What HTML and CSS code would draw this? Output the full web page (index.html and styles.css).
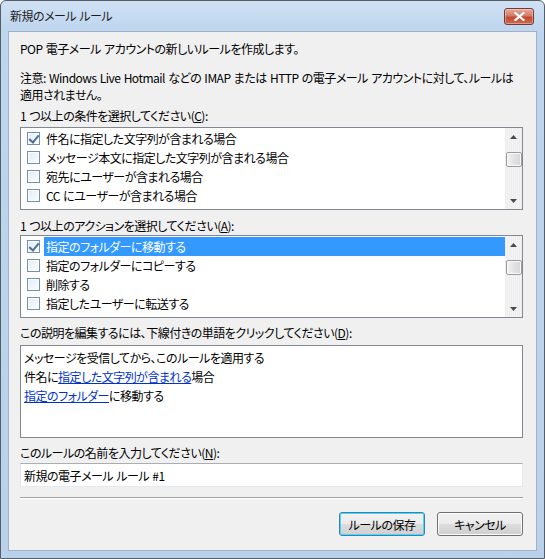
FILE: index.html
```html
<!DOCTYPE html>
<html lang="ja">

<head>
  <meta charset="UTF-8">
  <title>新規のメール ルール</title>
  <link rel="stylesheet" href="styles.css">
</head>

<body>
  <div class="window">
    <div class="titlebar">
      <span class="title">新規のメール ルール</span>
      <button class="close-btn" type="button">
        <svg width="11" height="9" viewBox="0 0 11 9">
          <path d="M1.5 1 L9.5 8 M9.5 1 L1.5 8" stroke="#fff" stroke-width="2.2" stroke-linecap="square" />
        </svg>
      </button>
    </div>

    <div class="client">
      <p class="intro">POP 電子メール アカウントの新しいルールを作成します。</p>
      <p class="note">注意: Windows Live Hotmail などの IMAP または HTTP の電子メール アカウントに対して、ルールは<br>適用されません。</p>

      <div class="caption">1 つ以上の条件を選択してください(<u>C</u>):</div>
      <div class="listbox">
        <ul class="list">
          <li><span class="check is-checked"></span>件名に指定した文字列が含まれる場合</li>
          <li><span class="check"></span>メッセージ本文に指定した文字列が含まれる場合</li>
          <li><span class="check"></span>宛先にユーザーが含まれる場合</li>
          <li><span class="check"></span>CC にユーザーが含まれる場合</li>
        </ul>
        <div class="scrollbar">
          <div class="scroll-arrow">
            <svg width="7" height="4" viewBox="0 0 7 4"><path d="M0 4 L3.5 0 L7 4 Z" fill="#4a4a4a" /></svg>
          </div>
          <div class="scroll-track">
            <div class="scroll-thumb"></div>
          </div>
          <div class="scroll-arrow">
            <svg width="7" height="4" viewBox="0 0 7 4"><path d="M0 0 L7 0 L3.5 4 Z" fill="#4a4a4a" /></svg>
          </div>
        </div>
      </div>

      <div class="caption caption-actions">1 つ以上のアクションを選択してください(<u>A</u>):</div>
      <div class="listbox listbox-actions">
        <ul class="list">
          <li><span class="check is-checked"></span><span class="item-text is-selected">指定のフォルダーに移動する</span></li>
          <li><span class="check"></span>指定のフォルダーにコピーする</li>
          <li><span class="check"></span>削除する</li>
          <li><span class="check"></span>指定したユーザーに転送する</li>
        </ul>
        <div class="scrollbar">
          <div class="scroll-arrow">
            <svg width="7" height="4" viewBox="0 0 7 4"><path d="M0 4 L3.5 0 L7 4 Z" fill="#4a4a4a" /></svg>
          </div>
          <div class="scroll-track">
            <div class="scroll-thumb"></div>
          </div>
          <div class="scroll-arrow">
            <svg width="7" height="4" viewBox="0 0 7 4"><path d="M0 0 L7 0 L3.5 4 Z" fill="#4a4a4a" /></svg>
          </div>
        </div>
      </div>

      <div class="caption caption-desc">この説明を編集するには、下線付きの単語をクリックしてください(<u>D</u>):</div>
      <div class="desc">
        <div>メッセージを受信してから、このルールを適用する</div>
        <div>件名に<a href="#">指定した文字列が含まれる</a>場合</div>
        <div><a href="#">指定のフォルダー</a>に移動する</div>
      </div>

      <div class="caption caption-name">このルールの名前を入力してください(<u>N</u>):</div>
      <input class="name-input" type="text" value="新規の電子メール ルール #1">

      <div class="separator"></div>

      <div class="buttons">
        <button class="btn btn-default" type="button">ルールの保存</button>
        <button class="btn" type="button">キャンセル</button>
      </div>
    </div>
  </div>
</body>

</html>
```

FILE: styles.css
```css
* {
  margin: 0;
  padding: 0;
  box-sizing: border-box;
}

body {
  width: 545px;
  height: 559px;
  overflow: hidden;
  background: #fff;
  font-family: "Noto Sans CJK JP", "Noto Sans", sans-serif;
  font-size: 12px;
  font-feature-settings: "palt";
  letter-spacing: -0.5px;
  word-spacing: 1px;
  color: #000;
}

.window {
  width: 545px;
  height: 559px;
  border: 1px solid #555d66;
  border-radius: 6px 6px 0 0;
  background: linear-gradient(#d0e1f4, #bed5ee 30px, #b9d1ea);
  padding: 0 7px 7px 7px;
  display: flex;
  flex-direction: column;
}

.titlebar {
  height: 30px;
  display: flex;
  align-items: center;
  justify-content: space-between;
  padding: 0 3px 2px 2px;
}

.title {
  font-size: 12px;
  line-height: 17px;
  color: #1e1e1e;
}

.close-btn {
  width: 30px;
  height: 17px;
  border: 1px solid #71392f;
  border-radius: 3px;
  background: linear-gradient(#e8a99c, #d57a68 45%, #c24a33 55%, #cd6a50);
  display: flex;
  align-items: center;
  justify-content: center;
  margin-top: 3px;
  box-shadow: inset 0 0 0 1px rgba(255, 255, 255, .35);
}

.client {
  flex: 1;
  background: #f0f0f0;
  border: 1px solid #9fb2c7;
  padding: 8px 13px 0 11px;
}

.intro,
.note,
.caption {
  line-height: 17px;
  white-space: nowrap;
}

.note {
  margin-top: 12px;
}

.caption {
  margin-top: 4px;
  margin-bottom: 3px;
}

.caption-actions {
  margin-top: 7px;
  margin-bottom: 1px;
}

.caption-desc {
  margin-top: 6px;
  margin-bottom: 4px;
}

.caption-name {
  margin-top: 6px;
  margin-bottom: 2px;
}

u {
  text-decoration: underline;
}

.listbox {
  height: 83px;
  border: 1px solid #828790;
  background: #fff;
  display: flex;
}

.list {
  flex: 1;
  list-style: none;
  padding: 1px 0 0 6px;
  overflow: hidden;
}

.list li {
  height: 19px;
  display: flex;
  align-items: center;
  white-space: nowrap;
}

.check {
  width: 13px;
  height: 13px;
  border: 1px solid #7090b4;
  background: linear-gradient(135deg, #e2ebf5, #fdfeff);
  box-shadow: inset 0 0 0 1px #fff;
  margin-right: 6px;
  flex-shrink: 0;
  position: relative;
}

.check.is-checked::after {
  content: "";
  position: absolute;
  left: 3px;
  top: 0;
  width: 4px;
  height: 8px;
  border: solid #4a6fa0;
  border-width: 0 2px 2px 0;
  transform: rotate(40deg);
}

.item-text.is-selected {
  flex: 1;
  align-self: stretch;
  display: flex;
  align-items: center;
  background: #3399ff;
  color: #fff;
  margin-left: -2px;
  padding-left: 2px;
}

.scrollbar {
  width: 17px;
  display: flex;
  flex-direction: column;
  background: repeating-linear-gradient(90deg, #ededed 0 1px, #f4f4f4 1px 2px);
}

.scroll-arrow {
  height: 17px;
  display: flex;
  align-items: center;
  justify-content: center;
}

.scroll-track {
  flex: 1;
  padding-top: 7px;
}

.scroll-thumb {
  width: 16px;
  height: 15px;
  margin-left: 1px;
  border: 1px solid #9b9b9b;
  border-radius: 2px;
  background: linear-gradient(90deg, #f4f4f4, #e2e2e2 50%, #d6d6d6);
  box-shadow: inset 0 0 0 1px #fafafa;
}

.desc {
  height: 93px;
  border: 1px solid #828790;
  background: #fff;
  padding: 2px 0 0 3px;
  line-height: 19px;
}

.desc a {
  color: #0033cc;
  text-decoration: underline;
}

.name-input {
  display: block;
  width: 100%;
  height: 24px;
  border: 1px solid #e3e9ef;
  border-top-color: #abadb3;
  background: #fff;
  padding: 0 3px;
  font-family: inherit;
  font-size: 12px;
  font-feature-settings: "palt";
  letter-spacing: -0.5px;
  word-spacing: 1px;
  color: #000;
  outline: none;
}

.separator {
  height: 2px;
  margin-top: 10px;
  border-top: 1px solid #a0a0a0;
  border-bottom: 1px solid #fff;
}

.buttons {
  display: flex;
  justify-content: flex-end;
  gap: 12px;
  margin-top: 13px;
}

.btn {
  width: 86px;
  height: 24px;
  border: 1px solid #707070;
  border-radius: 3px;
  background: linear-gradient(#f2f2f2, #ebebeb 50%, #dddddd 50%, #cfcfcf);
  box-shadow: inset 0 0 0 1px #fcfcfc;
  font-family: inherit;
  font-size: 12px;
  font-feature-settings: "palt";
  letter-spacing: -0.5px;
  color: #000;
}

.btn-default {
  border-color: #3c7fb1;
  box-shadow: inset 0 0 0 1px #48d8fb;
}
```
